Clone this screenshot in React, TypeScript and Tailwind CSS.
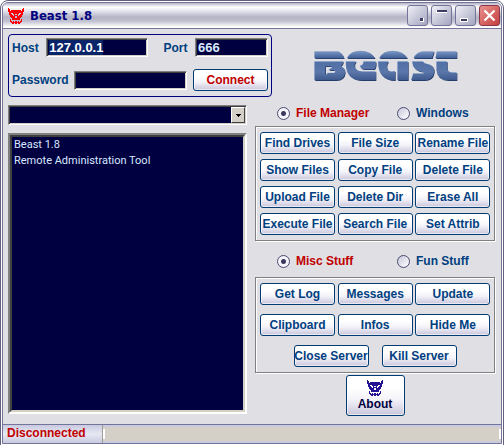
import { useId, useState } from "react";
import type { ReactNode } from "react";

const SKULL = [
  "#..............#",
  "##............##",
  "##.##########.##",
  "################",
  ".##############.",
  ".##..######..##.",
  ".###..#..#..###.",
  "..###.####.###..",
  "..#####..#####..",
  "...####..####...",
  "....########....",
  "..#.########.#..",
  "..#..........#..",
  "..##.#.##.#.##..",
  "...##########...",
  "....##.##.##....",
];

const FILE_ACTIONS = [
  "Find Drives", "File Size", "Rename File",
  "Show Files", "Copy File", "Delete File",
  "Upload File", "Delete Dir", "Erase All",
  "Execute File", "Search File", "Set Attrib",
];

const MISC_ACTIONS = ["Get Log", "Messages", "Update", "Clipboard", "Infos", "Hide Me"];

const LOG_LINES = ["Beast 1.8", "Remote Administration Tool"];

const SUNKEN =
  "border border-t-[#808080] border-l-[#808080] border-r-white border-b-white bg-[#000040] shadow-[inset_1px_1px_0_#404040,inset_-1px_-1px_0_#d4d0c8]";

const RAISED =
  "rounded-[3px] border border-[#003c74] bg-linear-to-b from-white from-30% via-[#f4f3f9] via-60% to-[#c9c6dc] shadow-[inset_0_0_0_1px_rgba(255,255,255,0.6)]";

function Skull({ className }: { className: string }) {
  return (
    <svg viewBox="0 0 16 16" className={className} fill="currentColor" shapeRendering="crispEdges" aria-hidden="true">
      {SKULL.flatMap((row, y) =>
        row.split("").map((c, x) => (c === "#" ? <rect key={`${x}-${y}`} x={x} y={y} width="1" height="1" /> : null))
      )}
    </svg>
  );
}

function BeastLogo() {
  const shapes = (
    <>
      {/* B */}
      <path d="M0 2H72Q84 8 88 22H0Z" />
      <path d="M0 32H86Q84 42 78 46Q91 51 91 65Q88 88 64 88H0ZM32 46V74L40 66H60Q64 62 60 58H42L52 50V46Z" fillRule="evenodd" />
      {/* e */}
      <path d="M97 22Q108 0 138 0Q170 1 181 22Z" />
      <path d="M94 32H124Q117 40 120 49Q126 62 143 62H183V88H139Q92 86 94 32Z" />
      <path d="M147 32H183Q186 45 179 55H150Q137 55 137 44Q147 43 147 32Z" />
      {/* a */}
      <path d="M194 22Q205 0 235 0Q267 1 278 22Z" />
      <path d="M191 32H221Q212 46 219 57Q226 65 241 61V88Q190 88 191 32Z" />
      <path d="M249 32H280V88H249Z" />
      {/* s */}
      <path d="M297 22Q307 2 326 2H358L352 22Z" />
      <path d="M293 32H325Q327 38 337 39Q361 43 358 64Q354 88 329 88H290L296 68H325Q331 67 327 63Q295 62 293 32Z" />
      {/* t */}
      <path d="M367 2H426V22H363Z" />
      <path d="M366 32H397V50Q397 63 412 65H426V88H400Q367 87 366 57Z" />
    </>
  );
  return (
    <svg viewBox="-2 -3 432 96" className="h-8 w-36" role="img" aria-label="Beast">
      <defs>
        <linearGradient id="steel" x1="0" y1="0" x2="0" y2="90" gradientUnits="userSpaceOnUse">
          <stop offset="0" stopColor="#7c98c6" />
          <stop offset="0.22" stopColor="#46649a" />
          <stop offset="0.36" stopColor="#5270a6" />
          <stop offset="0.7" stopColor="#5a76aa" />
          <stop offset="1" stopColor="#3a5689" />
        </linearGradient>
      </defs>
      <g transform="translate(2 2)" fill="#1c3461">{shapes}</g>
      <g transform="translate(-1 -1)" fill="#8fa9d0">{shapes}</g>
      <g fill="url(#steel)">{shapes}</g>
    </svg>
  );
}

function CaptionButton({ label, close, children }: { label: string; close?: boolean; children: ReactNode }) {
  return (
    <button
      type="button"
      aria-label={label}
      className={`size-[21px] rounded-[3px] border ${
        close
          ? "border-[#8c3448] bg-linear-to-br from-[#e89090] to-[#c43c3c]"
          : "border-[#74749a] bg-linear-to-br from-[#f0f0f6] to-[#a4a4c0]"
      }`}
    >
      <svg viewBox="0 0 19 19" className="size-full" aria-hidden="true">
        {children}
      </svg>
    </button>
  );
}

function Field({ label, value, width, selected }: { label: string; value: string; width: string; selected?: boolean }) {
  const id = useId();
  return (
    <>
      <label htmlFor={id}>{label}</label>
      <input
        id={id}
        type={label === "Password" ? "password" : "text"}
        defaultValue={value}
        autoFocus={selected}
        onFocus={(e) => e.target.select()}
        className={`h-[19px] min-w-0 px-0.5 text-[13px] leading-[14px] text-[#d8e8ff] outline-none selection:bg-[#0a246a] selection:text-white ${width} ${SUNKEN}`}
      />
    </>
  );
}

function RadioPair({ name, options }: { name: string; options: string[] }) {
  const [value, setValue] = useState(options[0]);
  return (
    <div className="grid h-4 grid-cols-[120px_1fr] pl-[22px]">
      {options.map((o) => (
        <label
          key={o}
          className={`flex items-center gap-1.5 whitespace-nowrap ${o === value ? "text-[#c00000]" : "text-[#004080]"}`}
        >
          <input
            type="radio"
            name={name}
            checked={o === value}
            onChange={() => setValue(o)}
            className="size-[13px] shrink-0 appearance-none rounded-full border border-[#4a4a72] bg-linear-to-br from-[#c8c8dc] to-white checked:bg-[radial-gradient(circle,#3a3a60_0_2px,#f4f4fa_3px)]"
          />
          {o}
        </label>
      ))}
    </div>
  );
}

function ActionButton({ label }: { label: string }) {
  return (
    <button type="button" className={`h-[22px] w-[75px] whitespace-nowrap text-[#004080] ${RAISED}`}>
      <span className="flex justify-center">{label}</span>
    </button>
  );
}

function Panel({ children }: { children: ReactNode }) {
  return (
    <div className="border border-[#808080] px-1 py-[5px] shadow-[1px_1px_0_#fff,inset_1px_1px_0_#fff]">
      {children}
    </div>
  );
}

export default function App() {
  return (
    <div className="flex min-h-screen flex-col rounded-t-lg border border-[#62607c] bg-white p-px font-['Liberation_Sans',Arial,sans-serif] text-xs leading-4 font-bold text-[#004080]">
      <div className="flex flex-1 flex-col overflow-hidden rounded-t-md border border-[#74749a] bg-[#e0dfe3]">
        {/* Title bar */}
        <header className="flex h-[26px] items-center gap-1.5 border-b border-[#74749a] bg-[linear-gradient(to_bottom,#b4b4c8_0,#fff_4px,#e4e4ee_8px,#b4b4c6_14px,#c0c0d0_18px,#fff_24px)] px-[5px]">
          <Skull className="size-4 text-[#f00]" />
          <h1 className="flex-1 font-['DejaVu_Sans_Condensed','DejaVu_Sans',sans-serif] text-[13px] text-[#000080]">Beast 1.8</h1>
          <div className="-mr-1 flex gap-[3px]">
            <CaptionButton label="Tray">
              <path d="M12 12h4v4h-4z" fill="#fff" />
              <path d="M12 12h3v3h-3z" fill="#3c3c64" />
            </CaptionButton>
            <CaptionButton label="Roll up">
              <path d="M4 4h11v3H4z" fill="#fff" />
              <path d="M5 4h10v2H5z" fill="#3c3c64" />
            </CaptionButton>
            <CaptionButton label="Minimize">
              <path d="M4 12h8v4H4z" fill="#fff" />
              <path d="M5 13h6v2H5z" fill="#3c3c64" />
            </CaptionButton>
            <CaptionButton label="Close" close>
              <path d="M4.500 4.500l10 10M14.500 4.500l-10 10" stroke="#fff" strokeWidth="2.200" />
            </CaptionButton>
          </div>
        </header>

        <main className="flex flex-1 flex-col gap-2 pt-[5px] pr-1.5 pb-2 pl-[5px]">
          <div className="flex">
            <form className="flex h-[63px] w-[264px] shrink-0 flex-col justify-between rounded border border-[#000080] px-[3px] pt-[3px] pb-[5px]">
              <div className="flex items-center justify-between">
                <Field label="Host" value="127.0.0.1" width="w-[102px]" selected />
                <span className="w-0" />
                <Field label="Port" value="666" width="w-[73px]" />
              </div>
              <div className="flex items-center justify-between">
                <Field label="Password" value="" width="w-[113px]" />
                <button type="button" className={`h-[22px] w-[75px] text-[#c00000] ${RAISED}`}>
                  Connect
                </button>
              </div>
            </form>
            <div className="flex flex-1 items-center justify-center pl-1">
              <BeastLogo />
            </div>
          </div>

          <div className="flex flex-1 gap-2">
            {/* Output */}
            <section className="flex flex-1 flex-col gap-2 pb-0.5">
              <div className={`relative h-5 ${SUNKEN}`}>
                <select aria-label="Directory" className="block size-full appearance-none outline-none" />
                <span className="pointer-events-none absolute inset-y-px right-px flex w-3.5 items-center justify-center border border-t-white border-l-white border-r-[#404040] border-b-[#404040] bg-[#d4d0c8]">
                  <svg viewBox="0 0 5 3" className="h-[3px] w-[5px] fill-black" shapeRendering="crispEdges" aria-hidden="true">
                    <path d="M0 0h5L2.500 3z" />
                  </svg>
                </span>
              </div>
              <div className="flex flex-1 border-2 border-t-[#808080] border-l-[#808080] border-r-white border-b-white">
                <ul className="flex-1 border-2 border-t-[#404040] border-l-[#404040] border-r-[#d4d0c8] border-b-[#d4d0c8] bg-[#000040] px-0.5 font-['Roboto',sans-serif] text-[11px] font-normal text-[#d8e8ff]">
                  {LOG_LINES.map((line) => (
                    <li key={line}>{line}</li>
                  ))}
                </ul>
              </div>
            </section>

            {/* Commands */}
            <section className="w-60 shrink-0">
              <RadioPair name="files" options={["File Manager", "Windows"]} />
              <div className="pt-[5px]">
                <Panel>
                  <div className="grid grid-cols-3 gap-x-[3px] gap-y-[5px]">
                    {FILE_ACTIONS.map((a) => (
                      <ActionButton key={a} label={a} />
                    ))}
                  </div>
                </Panel>
              </div>
              <div className="pt-3 pb-2">
                <RadioPair name="stuff" options={["Misc Stuff", "Fun Stuff"]} />
              </div>
              <Panel>
                <div className="grid grid-cols-3 gap-x-[3px] gap-y-[9px]">
                  {MISC_ACTIONS.map((a) => (
                    <ActionButton key={a} label={a} />
                  ))}
                </div>
                <div className="flex justify-center gap-[13px] pt-[9px]">
                  <ActionButton label="Close Server" />
                  <ActionButton label="Kill Server" />
                </div>
              </Panel>
              <div className="flex justify-center pt-0.5">
                <button type="button" className={`flex h-[41px] w-[59px] flex-col items-center justify-center text-[#000040] ${RAISED}`}>
                  <Skull className="size-4 text-[#241494]" />
                  About
                </button>
              </div>
            </section>
          </div>
        </main>

        <footer className="flex h-[19px] items-center border-t border-[#74749a] bg-[#d4d0c8] shadow-[inset_0_2px_0_#c8cae0,inset_0_-2px_0_#c8cae0]">
          <span className="h-full w-[100px] border-r border-[#a09c94] bg-linear-to-b from-[#c8cae0] via-[#e8e8f2] to-[#c8cae0] px-1 text-[#c00000]">
            Disconnected
          </span>
          <span className="my-1 flex-1 self-stretch border-x-2 border-white" />
        </footer>
      </div>
    </div>
  );
}
